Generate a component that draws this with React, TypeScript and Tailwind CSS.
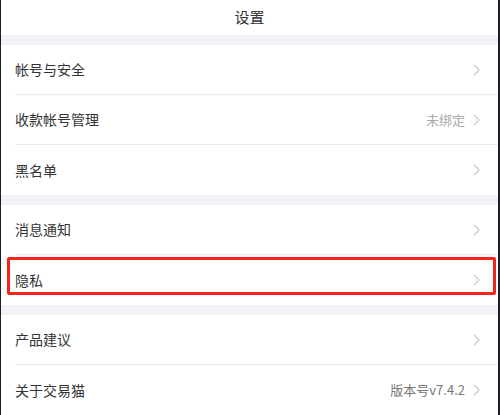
import { Fragment } from 'react';

interface SettingItem {
  label: string;
  value?: string;
  valueClass?: string;
  highlight?: boolean;
}

const groups: SettingItem[][] = [
  [
    { label: '帐号与安全' },
    { label: '收款帐号管理', value: '未绑定', valueClass: 'text-[#aaaaaa]' },
    { label: '黑名单' },
  ],
  [{ label: '消息通知' }, { label: '隐私', highlight: true }],
  [
    { label: '产品建议' },
    { label: '关于交易猫', value: '版本号v7.4.2', valueClass: 'text-[#777777]' },
  ],
];

function Chevron() {
  return (
    <svg width="7" height="12" viewBox="0 0 7 12" className="shrink-0">
      <polyline points="1,1 6,6 1,11" fill="none" stroke="#c8c8cc" strokeWidth="1.2" strokeLinejoin="round" />
    </svg>
  );
}

function Row({ item, last }: { item: SettingItem; last: boolean }) {
  return (
    <div className="relative h-[50px] pl-[14px] bg-white">
      <div
        className={`flex h-full items-center justify-between pr-[18px] ${
          last || item.highlight ? '' : 'border-b border-[#ececee]'
        }`}
      >
        <span className="text-[14px] text-[#333333]">{item.label}</span>
        <div className="flex items-center gap-[8px]">
          {item.value && <span className={`text-[13px] ${item.valueClass}`}>{item.value}</span>}
          <Chevron />
        </div>
      </div>
      {item.highlight && (
        <div className="absolute left-[6px] right-[2px] top-[2px] h-[38px] border-[3px] border-[#f5231b] rounded-[2px]" />
      )}
    </div>
  );
}

export default function App() {
  return (
    <div
      className="w-[500px] h-[415px] overflow-hidden flex bg-[#1d1d28]"
      style={{ fontFamily: '"Noto Sans CJK SC", "Noto Sans", sans-serif' }}
    >
      <div className="ml-px mr-[2px] flex-1 flex flex-col bg-[#f2f3f7]">
        {/* Header */}
        <div className="h-[35px] shrink-0 bg-white flex items-center justify-center">
          <span className="text-[15px] text-[#333333]">设置</span>
        </div>

        {groups.map((group, gi) => (
          <Fragment key={gi}>
            <div className="h-[10px] shrink-0" />
            <div className="shrink-0">
              {group.map((item, i) => (
                <Row key={item.label} item={item} last={i === group.length - 1} />
              ))}
            </div>
          </Fragment>
        ))}
      </div>
    </div>
  );
}
